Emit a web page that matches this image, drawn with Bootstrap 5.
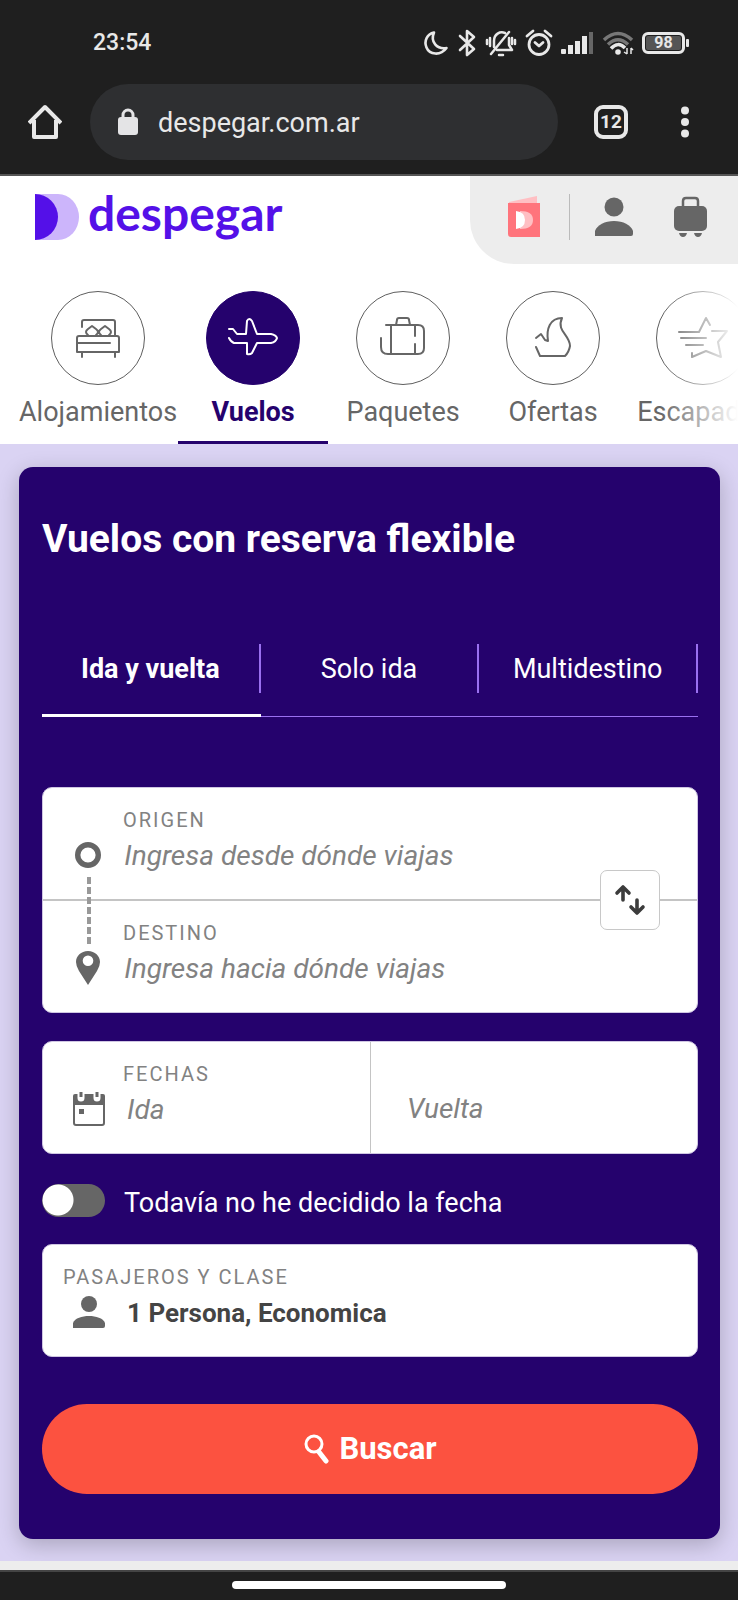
<!DOCTYPE html>
<html lang="es">
<head>
<meta charset="utf-8">
<meta name="viewport" content="width=device-width, initial-scale=1">
<title>Despegar - Vuelos</title>
<link href="https://cdn.jsdelivr.net/npm/bootstrap@5.3.0/dist/css/bootstrap.min.css" rel="stylesheet">
<style>
:root { --ink: #25026d; --gray: #666; --lilac: #dad3f3; --dark: #1f1f1f; }
body { font-family: Roboto, "Liberation Sans", sans-serif; font-size: 27px; line-height: 32px; color: var(--gray); background: var(--lilac); }
svg { display: block; flex: none; }
a { text-decoration: none; color: inherit; }
button { background: none; border: 0; padding: 0; color: inherit; font-weight: inherit; }

.phone-top { background: var(--dark); color: #e8e8e8; border-bottom: 2px solid #555; }
.status-row { height: 84px; padding: 2px 49px 0 93px; }
.clock { font-size: 23px; font-weight: 500; }
.battery { width: 43px; height: 22px; border: 3px solid #e8e8e8; border-radius: 6px; background: #555; font-size: 16px; line-height: 16px; font-weight: 700; box-shadow: inset 0 0 0 1px var(--dark); }
.battery-tip { width: 3px; height: 8px; border-radius: 1px; background: #e8e8e8; margin-left: 1px; }
.browser-row { padding: 0 48px 14px 28px; }
.address { height: 76px; margin-left: 28px; margin-right: 36px; padding-left: 27px; background: #2e2f31; border-radius: 38px; }
.address input { background: none; border: 0; outline: 0; color: inherit; min-width: 0; font-size: 27px; padding: 2px 0 0; margin-left: 19px; }
.tab-count { width: 34px; height: 34px; border: 4px solid #e8e8e8; border-radius: 9px; font-size: 19px; line-height: 20px; font-weight: 700; margin-right: 42px; }

.site-top { height: 88px; }
.brand { padding: 0 0 6px 35px; color: #5410e8; }
.brand-name { font-family: Lato, sans-serif; font-weight: 700; font-size: 48px; line-height: 54px; margin-left: 9px; margin-top: -9px; }
.user-tools { width: 268px; background: #ededed; border-bottom-left-radius: 44px; padding: 0 30px 6px 38px; }
.tool-line { width: 1px; height: 46px; background: #bbb; margin: 0 25px 0 28px; }

.products { padding: 27px 0 0 19px; overflow: hidden; }
.products::after { content: ""; position: absolute; top: 0; bottom: 0; right: 0; width: 78px; background: linear-gradient(90deg, rgba(255,255,255,0), #fff); }
.product { flex: 0 0 auto; min-width: 150px; height: 153px; border-bottom: 3px solid transparent; }
.product:first-child { padding-right: 1px; }
.product.active { border-color: var(--ink); color: var(--ink); font-weight: 700; border-radius: 4px 4px 0 0; }
.ring { width: 94px; height: 94px; border: 1px solid #5e5e5e; border-radius: 50%; }
.active .ring { background: var(--ink); border-color: var(--ink); color: #fff; }
.ring svg, .line-icon { fill: none; stroke: currentColor; stroke-width: 2; stroke-linecap: round; stroke-linejoin: round; }
.product-name { margin-top: 11px; }

.search-area { padding: 23px 18px 22px 19px; }
.search-card { background: var(--ink); color: #fff; border-radius: 14px; padding: 49px 22px 45px 23px; box-shadow: 0 6px 22px rgba(0,0,0,.22); }
.search-card h1 { font-size: 39px; line-height: 46px; font-weight: 700; margin: 0 0 82px; }
.trip-tabs { border-bottom: 1px solid #9a70f0; margin-bottom: 70px; }
.trip-tabs li { flex: 1 1 0; padding-bottom: 23px; }
.trip-tabs button { width: 100%; height: 49px; border-right: 2px solid #9a70f0; }
.trip-tabs li.chosen { border-bottom: 3px solid #fff; margin-bottom: -1px; padding-bottom: 21px; font-weight: 700; }

.panel { background: #fff; color: var(--gray); border: 1px solid #cfc6e2; border-radius: 10px; }
.field { height: 111px; padding: 20px 20px 0 30px; }
.field.below { height: 113px; border-top: 2px solid #c4c4c4; }
.field .cap { display: block; font-size: 20px; line-height: 24px; letter-spacing: 2px; color: #828282; padding-left: 50px; }
.field .cap.flush { padding-left: 0; margin-left: -10px; }
.field input { border: 0; outline: 0; background: none; padding: 2px 0 0; min-width: 0; width: 100%; line-height: 32px; color: #444; font-size: 28px; }
.field input::placeholder { color: #828282; font-style: italic; opacity: 1; }
.slot { width: 32px; margin-right: 22px; }
.entry { height: 46px; }
.field input.solid { font-weight: 700; font-size: 26px; }
.swap { right: 37px; top: 50%; transform: translateY(-50%); width: 60px; height: 60px; background: #fff; border: 1px solid #c8c8c8; border-radius: 7px; color: #3c3c3c; }
.trail { left: 44px; top: 89px; width: 4px; height: 68px; background: repeating-linear-gradient(#999 0 7px, transparent 7px 10px); }
.dates { margin-top: 28px; }
.dates .field { width: 50%; }
.dates .field + .field { border-left: 1px solid #c4c4c4; padding: 43px 20px 0 36px; }
.undecided { margin: 29px 0 26px; height: 35px; }
.undecided .form-check-input { width: 63px; height: 33px; margin: 0 19px 0 0; float: none; border: 0; background-color: #666; background-image: radial-gradient(circle at 16px 16px, #fff 15px, transparent 16px); background-position: left center; background-size: 63px 33px; }
.undecided label { padding-top: 5px; }
.go { height: 90px; border-radius: 45px; background: #fc5240; color: #fff; font-weight: 700; font-size: 31px; margin-top: 47px; }
.page-end { height: 9px; background: #ededed; }
.phone-nav { height: 30px; background: var(--dark); border-top: 2px solid #444; padding-bottom: 3px; }
.phone-nav button { width: 37%; height: 8px; border-radius: 4px; background: #fff; }
</style>
</head>
<body>
<header class="phone-top">
  <div class="status-row d-flex align-items-center justify-content-between">
    <span class="clock">23:54</span>
    <div class="d-flex align-items-center">
      <svg width="26" height="26" viewBox="0 0 26 26" class="line-icon" style="stroke-width:2.6"><path d="M11 2.5C4 4 .8 11 3.500 17.500C6.500 25 17.500 26 23.500 18C14 19.500 7 12 11 2.500Z"/></svg>
      <svg class="line-icon ms-2" width="20" height="28" viewBox="0 0 20 28" style="stroke-width:2.6"><path d="M3 7l14 13-7 6V2l7 6L3 21"/></svg>
      <svg class="line-icon ms-2" width="32" height="28" viewBox="0 0 32 28" style="stroke-width:2.500"><path d="M6 25L24 3M9 18V12C9 5 15 2 20 4M24 9v7l3 5H12M2 11v4M5 9v8M27 9v6M30 11v4M14 26h4"/></svg>
      <svg class="line-icon ms-2" width="28" height="28" viewBox="0 0 28 28" style="stroke-width:2.800"><circle cx="14" cy="15.500" r="10"/><path d="M10 13.500l4 3.500 4-3.500M2 7l6-5M26 7l-6-5"/></svg>
      <svg class="ms-2" width="33" height="24" viewBox="0 0 33 24" fill="#e8e8e8"><rect x="0" y="18" width="5" height="5" rx="1"/><rect x="7" y="14" width="5" height="9"/><rect x="14" y="10" width="5" height="13"/><rect x="21" y="5" width="5" height="18"/><rect x="28" y="1" width="4" height="22" fill="#666"/></svg>
      <svg class="ms-2" width="32" height="26" viewBox="0 0 32 26" fill="none" stroke-width="3.500"><path d="M2 10Q16-3 30 10" stroke="#777"/><path d="M6 14.500Q16 5 26 14.500" stroke="#777"/><path d="M9 18.500Q16 11 23 18" stroke="#e8e8e8"/><circle cx="16" cy="22" r="2.800" fill="#e8e8e8" stroke="none"/><path d="M25 18v6M29 18v6M22 22l3 2M29 18l2 2" stroke="#e8e8e8" stroke-width="1.500"/></svg>
      <span class="battery ms-2 text-center">98</span><span class="battery-tip"></span>
    </div>
  </div>
  <div class="browser-row d-flex align-items-center">
    <button type="button" aria-label="Inicio"><svg width="34" height="36" viewBox="0 0 34 36" fill="none" stroke="currentColor" stroke-width="4" stroke-linejoin="round"><path d="M1 19L17 3l16 16M6 16v17h22V16"/></svg></button>
    <div class="address d-flex align-items-center flex-grow-1">
      <svg width="22" height="28" viewBox="0 0 22 28"><rect x="1" y="9" width="20" height="18" rx="3" fill="#e4e4e6"/><path d="M6 10V7a5 5 0 0 1 10 0v3" fill="none" stroke="#e4e4e6" stroke-width="3"/></svg>
      <input class="flex-grow-1" type="text" value="despegar.com.ar" aria-label="Dirección">
    </div>
    <button type="button" class="tab-count d-flex align-items-center justify-content-center" aria-label="Pestañas">12</button>
    <button type="button" aria-label="Menú"><svg width="20" height="32" viewBox="0 0 20 32" fill="currentColor"><circle cx="15" cy="4.500" r="4"/><circle cx="15" cy="16" r="4"/><circle cx="15" cy="27.500" r="4"/></svg></button>
  </div>
</header>

<div class="bg-white">
  <div class="site-top d-flex justify-content-between">
    <a href="#" class="brand d-flex align-items-center">
      <svg width="44" height="46" viewBox="0 0 44 46"><path d="M0 0H23A21 23 0 0 1 23 46H0Z" fill="#ccb5fb"/><path d="M0 0A23 23 0 0 1 0 46Z" fill="#5410e8"/></svg>
      <span class="brand-name">despegar</span>
    </a>
    <div class="user-tools d-flex align-items-center">
      <a href="#" aria-label="Pasaporte"><svg width="33" height="42" viewBox="0 0 33 42"><path d="M1 6L29 0v12H1Z" fill="#ffbfc3"/><path d="M0 7H32V41H3Q0 41 0 38Z" fill="#ff747c"/><path d="M12 15Q25 15 25 24T12 33Z" fill="#ffbfc3"/><path d="M8 15Q17 16 17 24T8 33Z" fill="#fff"/></svg></a>
      <span class="tool-line"></span>
      <a href="#" aria-label="Mi cuenta"><svg width="38" height="40" viewBox="0 0 38 40" fill="#666"><circle cx="19" cy="10" r="9.500"/><path d="M0 39V34C2 28 10 24 19 24s17 4 19 10v3q0 2-2 2Z"/></svg></a>
      <a href="#" class="ms-auto" aria-label="Mis viajes"><svg width="35" height="42" viewBox="0 0 35 42" fill="#666"><path d="M10 10V5q0-3 3-3h9q3 0 3 3v5" fill="none" stroke="#666" stroke-width="2.500"/><rect x="1" y="10" width="33" height="25" rx="5"/><path d="M6 37h8q-1 4-4 4t-4-4M21 37h8q-1 4-4 4t-4-4"/></svg></a>
    </div>
  </div>

  <nav class="products position-relative d-flex flex-nowrap" aria-label="Productos">
    <a href="#" class="product d-flex flex-column align-items-center">
      <span class="ring d-flex align-items-center justify-content-center"><svg width="48" height="42" viewBox="0 0 48 42"><path d="M8 10V5q0-2 2-2H39q2 0 2 2V18M3 35V21q0-2 2-2H43q2 0 2 2V35ZM3 26H36M8 35v5M41 35v5M14 18q-4-3 0-6l4-3 4 3q4 3 0 6M27 18q-4-3 0-6l4-3 4 3q4 3 0 6"/></svg></span>
      <span class="product-name">Alojamientos</span>
    </a>
    <a href="#" class="product active d-flex flex-column align-items-center" aria-current="page">
      <span class="ring d-flex align-items-center justify-content-center"><svg width="50" height="42" viewBox="0 0 50 42"><path d="M1 12H5l4 5H18L19 4q2-4 5 0l5 13H43q5 1 6 4q-1 4-6 5H29L24 36q-2 2-5 1V26H6q-3-1-5-5"/></svg></span>
      <span class="product-name">Vuelos</span>
    </a>
    <a href="#" class="product d-flex flex-column align-items-center">
      <span class="ring d-flex align-items-center justify-content-center"><svg width="48" height="42" viewBox="0 0 48 42"><path d="M7 8H39q6 0 6 6V31q0 6-6 6H9q-7 0-7-7V21M12 8V37M36 8V19M36 27V37M17 8l1-5q0-2 2-2h8q2 0 2 2l1 5"/></svg></span>
      <span class="product-name">Paquetes</span>
    </a>
    <a href="#" class="product d-flex flex-column align-items-center">
      <span class="ring d-flex align-items-center justify-content-center"><svg width="44" height="44" viewBox="0 0 44 44"><path d="M5 22l5-4 4 6 3 1C15 13 19 2 31 2C25 15 39 19 39 30q-1 6-5 10H9L5 31"/></svg></span>
      <span class="product-name">Ofertas</span>
    </a>
    <a href="#" class="product d-flex flex-column align-items-center">
      <span class="ring d-flex align-items-center justify-content-center"><svg width="52" height="44" viewBox="0 0 52 44"><path d="M2 16H22L29 2l4 7M35 15H50L41 26l3 15-15-6-14 6V37M4 22H29M9 29H26"/></svg></span>
      <span class="product-name">Escapadas</span>
    </a>
  </nav>
</div>

<main class="search-area">
  <form class="search-card">
    <h1>Vuelos con reserva flexible</h1>
    <ul class="trip-tabs list-unstyled d-flex">
      <li class="chosen"><button type="button">Ida y vuelta</button></li>
      <li><button type="button">Solo ida</button></li>
      <li><button type="button">Multidestino</button></li>
    </ul>

    <div class="panel position-relative">
      <div class="field">
        <label class="cap" for="origen">ORIGEN</label>
        <div class="entry d-flex align-items-center">
          <span class="slot d-flex justify-content-center"><svg width="26" height="26" viewBox="0 0 26 26"><circle cx="13" cy="13" r="10.300" fill="none" stroke="#666" stroke-width="5.400"/></svg></span>
          <input id="origen" type="text" placeholder="Ingresa desde dónde viajas">
        </div>
      </div>
      <div class="field below">
        <label class="cap" for="destino">DESTINO</label>
        <div class="entry d-flex align-items-center">
          <span class="slot d-flex justify-content-center"><svg width="24" height="34" viewBox="0 0 24 34"><path fill="#666" fill-rule="evenodd" d="M12 0C5 0 0 5 0 11q0 4 3 9l9 14 9-14q3-5 3-9C24 5 19 0 12 0Zm0 4.500a5.300 5.300 0 1 1 0 10.600a5.300 5.300 0 0 1 0-10.600Z"/></svg></span>
          <input id="destino" type="text" placeholder="Ingresa hacia dónde viajas">
        </div>
      </div>
      <span class="trail position-absolute"></span>
      <button type="button" class="swap position-absolute d-flex align-items-center justify-content-center" aria-label="Intercambiar"><svg class="line-icon" width="32" height="34" viewBox="0 0 32 34" style="stroke-width:3.600"><path d="M9 17V4M3 10l6-6 6 6M23 17V30M17 24l6 6 6-6"/></svg></button>
    </div>

    <div class="panel dates d-flex">
      <div class="field">
        <label class="cap" for="ida">FECHAS</label>
        <div class="entry d-flex align-items-center">
          <span class="slot d-flex justify-content-center"><svg width="34" height="36" viewBox="0 0 34 36"><path d="M2 14V32q0 2 2 2H30q2 0 2-2V14" fill="none" stroke="#666" stroke-width="2"/><path d="M1 14V5q0-2 2-2H31q2 0 2 2v9Z" fill="#666"/><path d="M9 2v5M25 2v5" stroke="#fff" stroke-width="7" stroke-linecap="round"/><path d="M9 1v5M25 1v5" stroke="#666" stroke-width="3"/><rect x="7" y="18" width="5" height="5" fill="#666"/></svg></span>
          <input id="ida" type="text" placeholder="Ida">
        </div>
      </div>
      <div class="field">
        <div class="entry d-flex align-items-center"><input type="text" placeholder="Vuelta" aria-label="Vuelta"></div>
      </div>
    </div>

    <div class="undecided form-switch d-flex align-items-center p-0">
      <input class="form-check-input" type="checkbox" role="switch" id="sinfecha">
      <label for="sinfecha">Todavía no he decidido la fecha</label>
    </div>

    <div class="panel">
      <div class="field">
        <label class="cap flush" for="pasajeros">PASAJEROS Y CLASE</label>
        <div class="entry d-flex align-items-center">
          <span class="slot d-flex justify-content-center"><svg width="32" height="32" viewBox="0 0 32 32" fill="#666"><circle cx="16" cy="8" r="8"/><path d="M0 32V27C2 22 9 20 16 20s14 2 16 7v3q0 2-2 2Z"/></svg></span>
          <input id="pasajeros" class="solid" type="text" value="1 Persona, Economica" readonly>
        </div>
      </div>
    </div>

    <button type="submit" class="go w-100 d-flex align-items-center justify-content-center">
      <svg class="me-2" width="28" height="30" viewBox="0 0 28 30" fill="none" stroke="#fff" stroke-linecap="round"><circle cx="11" cy="10" r="8" stroke-width="3"/><path d="M16 18l7 9" stroke-width="5"/></svg>
      Buscar
    </button>
  </form>
</main>
<div class="page-end"></div>
<footer class="phone-nav d-flex align-items-center justify-content-center"><button type="button" aria-label="Inicio del teléfono"></button></footer>
<script src="https://cdn.jsdelivr.net/npm/bootstrap@5.3.0/dist/js/bootstrap.bundle.min.js"></script>
</body>
</html>
